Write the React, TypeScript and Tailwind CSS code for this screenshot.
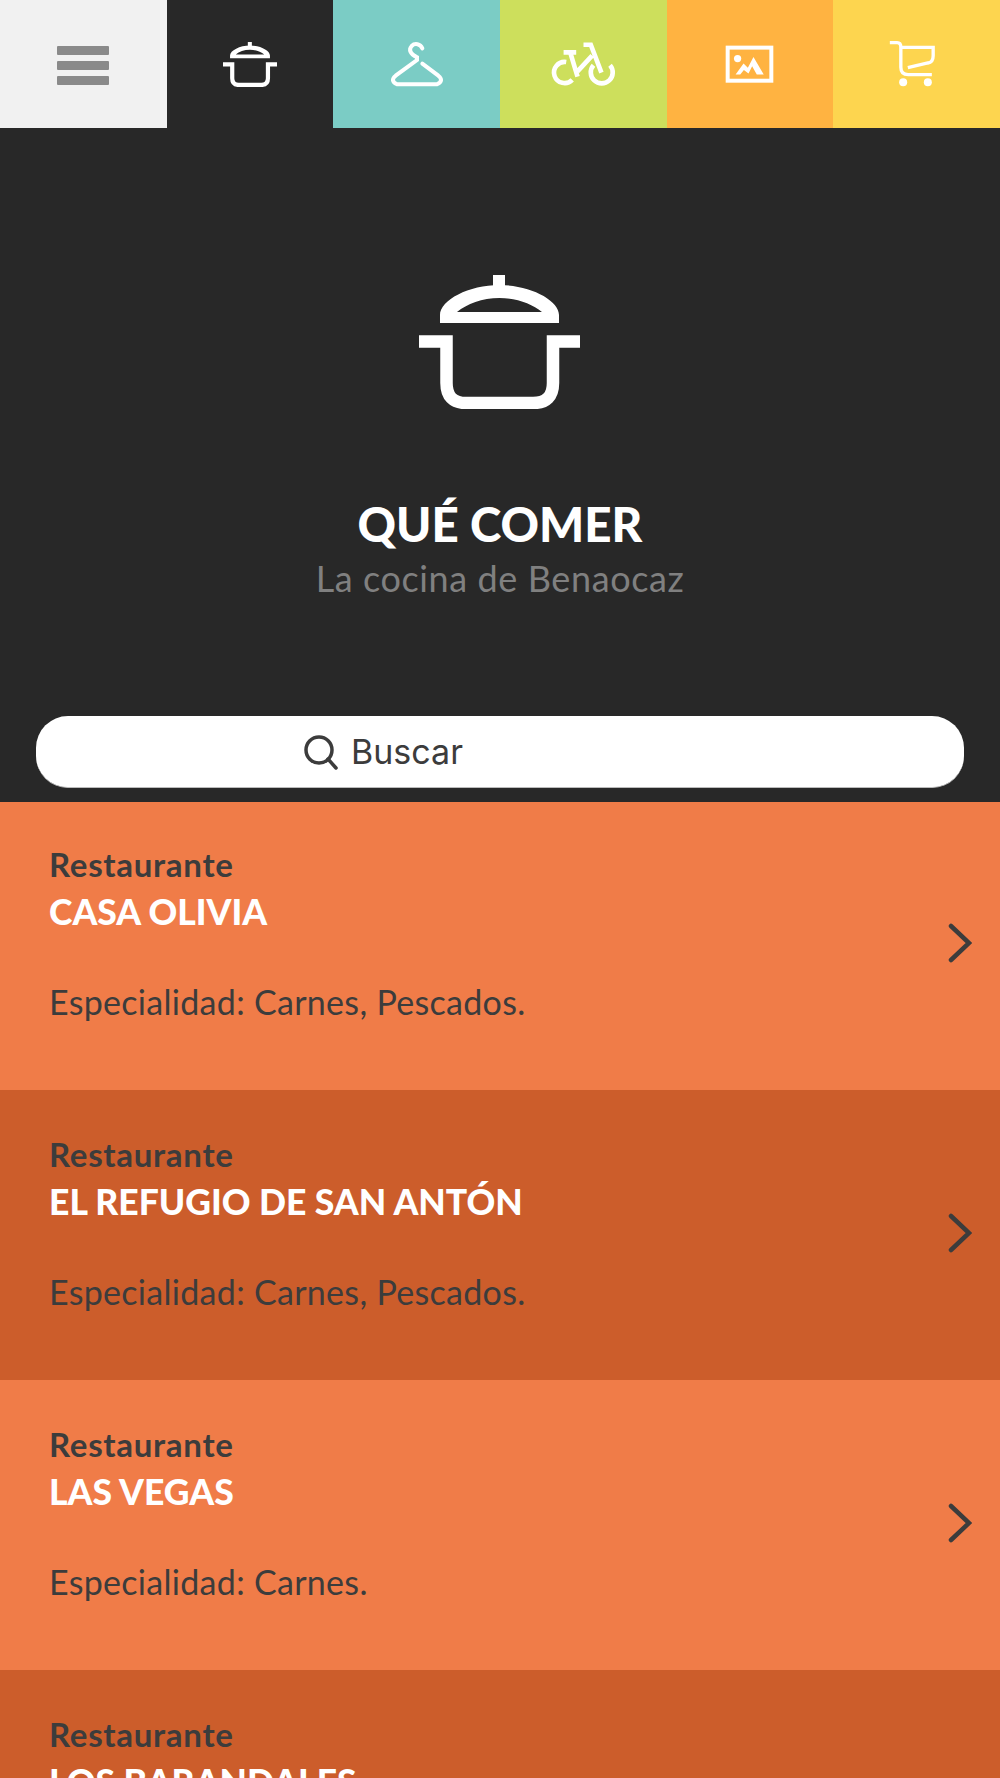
const Pot = ({ className }: { className: string }) => (
  <svg viewBox="0 0 161 134" className={className} fill="white">
    <rect x="74" y="0" width="12" height="14" />
    <path
      fillRule="evenodd"
      d="M21 48V40C21 25 50 10 80.5 10C111 10 140 25 140 40V48ZM38 37H123C113 29 98 23 80.5 23C63 23 48 29 38 37Z"
    />
    <path
      d="M0 66.5H27.5V108Q27.5 128 47 128H114Q134 128 134 108V66.5H161"
      fill="none"
      stroke="white"
      strokeWidth="12.5"
    />
  </svg>
);

const HangerIcon = () => (
  <svg viewBox="1160 115 180 150" className="w-[60px] h-[50px]" fill="none" stroke="white" strokeWidth="12" strokeLinecap="round">
    <path d="M1266 143C1260 130 1244 126 1234 136C1224 147 1230 160 1250 170V178L1186 225Q1168 240 1190 251H1310Q1332 240 1314 225L1266 189" />
  </svg>
);

const BikeIcon = () => (
  <svg viewBox="140 115 220 150" className="w-[73px] h-[50px]" fill="none" stroke="white" strokeWidth="14">
    <path d="M198 184A32 32 0 1 0 216 238" />
    <path d="M280 194A33 33 0 1 0 330 194" />
    <path d="M190 155H228M210 155L232 228M232 212L276 165M250 132H272L304 216" />
  </svg>
);

const PictureIcon = () => (
  <svg viewBox="670 130 160 130" className="w-[53px] h-[43px]" fill="none">
    <rect x="684" y="144" width="132" height="100" stroke="white" strokeWidth="12" />
    <circle cx="714" cy="177" r="11" fill="white" />
    <path d="M708 225L732 192L745 205L762 172L793 225H772L758 200L747 222L733 212L722 225Z" fill="white" />
  </svg>
);

const CartIcon = () => (
  <svg viewBox="1165 120 170 150" className="w-[57px] h-[50px]" fill="none" stroke="white" strokeWidth="10">
    <path d="M1170 131H1192Q1203 131 1203 145V205Q1203 227 1225 227H1296" />
    <path d="M1203 145H1300V170Q1300 190 1284 192L1224 206" />
    <circle cx="1210" cy="250" r="12" fill="white" stroke="none" />
    <circle cx="1284" cy="250" r="12" fill="white" stroke="none" />
  </svg>
);

const MenuIcon = () => (
  <div className="flex flex-col gap-[6px] w-[52px] mt-[3px]">
    <div className="h-[9px] rounded-[1px] bg-[#8a8a8a]" />
    <div className="h-[9px] rounded-[1px] bg-[#8a8a8a]" />
    <div className="h-[9px] rounded-[1px] bg-[#8a8a8a]" />
  </div>
);

const navItems = [
  { bg: "bg-[#f1f1f1]", icon: <MenuIcon /> },
  { bg: "bg-[#282828]", icon: <Pot className="w-[54px] h-[45px]" /> },
  { bg: "bg-[#7bccc5]", icon: <HangerIcon /> },
  { bg: "bg-[#cddf5c]", icon: <BikeIcon /> },
  { bg: "bg-[#ffb341]", icon: <PictureIcon /> },
  { bg: "bg-[#fdd54f]", icon: <CartIcon /> },
];

const places = [
  { name: "CASA OLIVIA", speciality: "Especialidad: Carnes, Pescados." },
  { name: "EL REFUGIO DE SAN ANTÓN", speciality: "Especialidad: Carnes, Pescados." },
  { name: "LAS VEGAS", speciality: "Especialidad: Carnes." },
  { name: "LOS BARANDALES", speciality: "Especialidad: Carnes." },
];

const App = () => {
  return (
    <div className="h-screen overflow-hidden bg-[#282828] font-[Lato,sans-serif]">
      {/* Top nav */}
      <div className="grid grid-cols-6 h-[128px]">
        {navItems.map((item, i) => (
          <div key={i} className={`${item.bg} flex items-center justify-center`}>
            {item.icon}
          </div>
        ))}
      </div>

      {/* Hero */}
      <div className="h-[674px] flex flex-col items-center pt-[147px]">
        <Pot className="w-[161px] h-[134px] mr-[2px]" />
        <div className="mt-[87px] text-[47.5px] leading-[56px] font-black text-white">QUÉ COMER</div>
        <div className="mt-[4px] text-[36px] leading-[44px] tracking-[0.6px] text-[#808080]">La cocina de Benaocaz</div>
        <div className="mt-[116px] w-[928px] h-[72px] rounded-[32px] bg-white border-b border-[#bbbbbb] flex items-center pl-[267px] gap-[12px] font-[Inter,sans-serif] text-[34px] text-[#3c3c3c]">
          <svg viewBox="0 0 36 36" className="w-[36px] h-[36px]" fill="none" stroke="#3c3c3c" strokeWidth="3.5" strokeLinecap="round">
            <circle cx="16" cy="16" r="13" />
            <path d="M25 25L33 34" />
          </svg>
          Buscar
        </div>
      </div>

      {/* List */}
      {places.map((place, i) => (
        <div
          key={place.name}
          className={`${i % 2 === 0 ? "bg-[#f07c48]" : "bg-[#cc5d2b]"} ${
            i === 0 ? "h-[288px] pt-[40px]" : "h-[290px] pt-[42px]"
          } pl-[49px] pr-[28px] flex justify-between`}
        >
          <div>
            <div className="text-[33px] leading-[44px] tracking-[0.7px] font-bold text-[#3c3c3c]">Restaurante</div>
            <div className="mt-[4px] text-[35.5px] leading-[44px] font-black text-white">{place.name}</div>
            <div className="mt-[46px] text-[34px] leading-[44px] tracking-[0.3px] text-[#3c3c3c]">{place.speciality}</div>
          </div>
          <svg viewBox="0 0 24 40" className="mt-[81px] w-[24px] h-[40px]" fill="none" stroke="#3c3c3c" strokeWidth="4.5" strokeLinecap="round">
            <path d="M3 3L21 20L3 37" />
          </svg>
        </div>
      ))}
    </div>
  );
};

export default App;
